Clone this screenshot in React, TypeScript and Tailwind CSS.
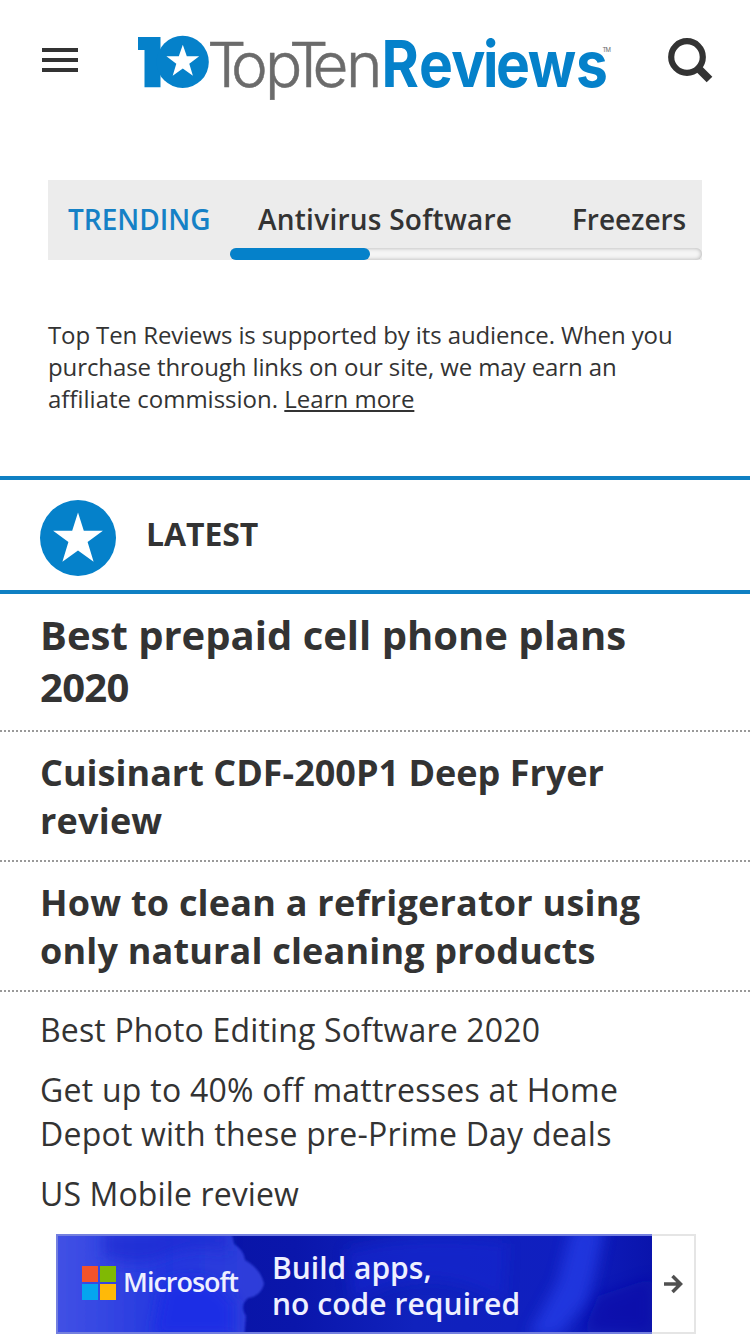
import { ReactNode } from 'react'

type Line = { text: string; className: string }

const headlines: { lines: Line[]; className: string }[] = [
  {
    lines: [
      { text: 'Best prepaid cell phone plans', className: '' },
      { text: '2020', className: 'tracking-[-0.7px]' },
    ],
    className: 'pt-[15px] pb-[17px] text-[40px] leading-[52px]',
  },
  {
    lines: [
      { text: 'Cuisinart CDF-200P1 Deep Fryer', className: '' },
      { text: 'review', className: 'tracking-[0.2px]' },
    ],
    className: 'pt-[17px] pb-[15px] text-[36px] leading-[48px]',
  },
  {
    lines: [
      { text: 'How to clean a refrigerator using', className: 'tracking-[0.23px]' },
      { text: 'only natural cleaning products', className: 'tracking-[0.18px]' },
    ],
    className: 'pt-[17px] pb-[15px] text-[36px] leading-[48px]',
  },
]

const links: Line[][] = [
  [{ text: 'Best Photo Editing Software 2020', className: 'tracking-[0.16px]' }],
  [
    { text: 'Get up to 40% off mattresses at Home', className: 'tracking-[0.25px]' },
    { text: 'Depot with these pre-Prime Day deals', className: 'tracking-[0.22px]' },
  ],
  [{ text: 'US Mobile review', className: 'tracking-[0.12px]' }],
]

const adCopy: Line[] = [
  { text: 'Build apps,', className: '' },
  { text: 'no code required', className: 'tracking-[0.05px]' },
]

function Lines({ lines }: { lines: Line[] }) {
  return (
    <>
      {lines.map((line) => (
        <span key={line.text} className={`block whitespace-nowrap ${line.className}`}>
          {line.text}
        </span>
      ))}
    </>
  )
}

function Logo() {
  return (
    <svg width="480" height="80" viewBox="134 28 480 80" className="block overflow-visible" aria-label="Top Ten Reviews">
      <path d="M138 37h22.5v50.3h-16V50H138z" fill="#0581ca" />
      <circle cx="182.7" cy="61.9" r="26.1" fill="#0581ca" />
      <path
        d="M182.8 44.8l4 11.4h12.4l-9.9 7.5 3.6 12-10.1-7.2-10.1 7.2 3.6-12-9.9-7.5h12.4z"
        fill="#fff"
      />
      <text
        x="207 231 265 289 312.5 346"
        y="87"
        fill="#6b6b6b"
        stroke="#6b6b6b"
        strokeWidth="0.5"
        fontFamily="Inter, sans-serif"
        fontWeight="300"
        fontSize="62"
      >
        TopTen
      </text>
      <text
        x="428.7 470.7 507.1 542.7 557.3 592.9 647.2"
        y="87"
        transform="scale(0.89 1)"
        fill="#0581ca"
        fontFamily="Inter, sans-serif"
        fontWeight="700"
        fontSize="64"
      >
        Reviews
      </text>
      <text x="602.5" y="52" fill="#6b6b6b" fontFamily="Inter, sans-serif" fontSize="6" textLength="8.5">
        TM
      </text>
    </svg>
  )
}

function Header() {
  return (
    <header className="flex h-[108px] items-start">
      <button className="mt-12 ml-[42px] flex w-9 flex-col gap-1.5" aria-label="Menu">
        <span className="h-1 w-full bg-[#333]" />
        <span className="h-1 w-full bg-[#333]" />
        <span className="h-1 w-full bg-[#333]" />
      </button>
      <div className="mt-7 ml-14">
        <Logo />
      </div>
      <svg width="48" height="48" viewBox="0 0 48 48" className="mt-9 ml-[51px]" fill="none" stroke="#333">
        <circle cx="22" cy="21" r="15.8" strokeWidth="6.2" />
        <path d="M32.500 31.500L44.500 43.500" strokeWidth="8" />
      </svg>
    </header>
  )
}

function Trending() {
  return (
    <nav className="mx-12 mt-[72px] flex h-20 overflow-hidden bg-[#ececec] text-[28px] font-semibold leading-[38px]">
      <div className="w-[182px] pt-5 pl-5 text-[#1581c6]">TRENDING</div>
      <div className="flex flex-1 flex-col justify-between">
        <div className="flex gap-[60px] pt-5 pl-7 whitespace-nowrap">
          <span className="w-[254px] tracking-[0.25px]">Antivirus Software</span>
          <span className="tracking-[-0.05px]">Freezers</span>
        </div>
        <div className="h-3 rounded-full bg-[#f5f5f5] shadow-[inset_0_0_4px_rgba(0,0,0,0.3)]">
          <div className="h-3 w-[140px] rounded-full bg-[#0581ca]" />
        </div>
      </div>
    </nav>
  )
}

function SectionHeading({ children }: { children: ReactNode }) {
  return (
    <div className="mt-[61px] flex h-[118px] items-start border-y-4 border-[#1080c3] pl-10">
      <svg width="76" height="76" viewBox="0 0 76 76" className="mt-5">
        <circle cx="38" cy="38" r="38" fill="#0581ca" />
        <path d="M38 12.500l5.800 18.200h19.100L47.600 42l6 19.800L38 50.400 22.400 61.800l6-19.800L13.100 30.700h19.100z" fill="#fff" />
      </svg>
      <h2 className="mt-8 ml-[30px] text-[32px] font-bold leading-[44px] tracking-[-0.1px]">{children}</h2>
    </div>
  )
}

function AdBanner() {
  return (
    <div className="mt-[18px] ml-14 flex h-[100px] w-[640px] border-2 border-[#e5e5e5]">
      <div className="relative -my-0.5 -ml-0.5 w-[596px] overflow-hidden border-2 border-r-0 border-[#7480df] bg-[#101fb8] text-[#eef0ff]">
        <svg viewBox="0 0 594 96" preserveAspectRatio="none" className="absolute inset-0 h-full w-full">
          <defs>
            <linearGradient id="sky">
              <stop offset="0" stopColor="#4353e5" />
              <stop offset="0.55" stopColor="#2437df" />
              <stop offset="1" stopColor="#303fd9" />
            </linearGradient>
            <linearGradient id="deep">
              <stop offset="0" stopColor="#0812a0" />
              <stop offset="0.4" stopColor="#0a16ab" />
              <stop offset="0.6" stopColor="#1022bd" />
              <stop offset="0.85" stopColor="#101fc0" />
              <stop offset="1" stopColor="#0a14ac" />
            </linearGradient>
            <filter id="soft" x="-30%" y="-30%" width="160%" height="160%">
              <feGaussianBlur stdDeviation="7" />
            </filter>
            <filter id="edge">
              <feGaussianBlur stdDeviation="1.2" />
            </filter>
          </defs>
          <rect width="594" height="96" fill="url(#deep)" />
          <path
            d="M-9 -9H172L176 8Q186 14 187 24Q203 33 206 48Q203 60 190 62Q181 70 188 80L186 105H-9z"
            fill="url(#sky)"
            filter="url(#edge)"
          />
          <path d="M45 -5H170V16Q140 8 112 18Q82 34 45 20z" fill="#1a2bd2" opacity="0.7" filter="url(#soft)" />
          <path d="M105 47Q148 36 163 53L176 66V100H95z" fill="#1a2de5" filter="url(#soft)" />
          <path d="M288 14Q360 -4 449 8L445 65Q365 20 295 68z" fill="#1628d0" opacity="0.6" filter="url(#soft)" />
          <path d="M514 -10H547L538 34 530 65 500 100H470L500 45z" fill="#283feb" opacity="0.7" filter="url(#soft)" />
          <path d="M540 60L594 42V96H525z" fill="#070faa" opacity="0.7" filter="url(#soft)" />
        </svg>
        <div className="relative flex items-start">
          <div className="mt-[30px] ml-6 grid grid-cols-2 gap-0.5">
            <span className="size-4 bg-[#f3532b]" />
            <span className="size-4 bg-[#80b904]" />
            <span className="size-4 bg-[#05a5ef]" />
            <span className="size-4 bg-[#ffb908]" />
          </div>
          <span className="mt-7 ml-[7px] w-[149px] text-[27px] font-semibold leading-9 tracking-[-1px]">
            Microsoft
          </span>
          <div className="mt-[14px] text-[30px] font-semibold leading-9">
            <Lines lines={adCopy} />
          </div>
        </div>
      </div>
      <div className="flex flex-1 items-center justify-center bg-white">
        <svg width="20" height="20" viewBox="0 0 20 20" fill="none" stroke="#505050" strokeWidth="3.5">
          <path d="M1 10h16M9.500 2L17.500 10L9.500 18" />
        </svg>
      </div>
    </div>
  )
}

export default function App() {
  return (
    <div className="h-[1334px] w-[750px] overflow-hidden bg-white font-['Open_Sans','Noto_Sans',sans-serif] text-[#333]">
      <Header />
      <Trending />
      <p className="mx-12 mt-[59px] text-[24px] leading-8">
        <span className="block tracking-[-0.12px] whitespace-nowrap">
          Top Ten Reviews is supported by its audience. When you
        </span>
        <span className="block tracking-[-0.1px] whitespace-nowrap">
          purchase through links on our site, we may earn an
        </span>
        affiliate commission. <a className="underline">Learn more</a>
      </p>
      <SectionHeading>LATEST</SectionHeading>
      {headlines.map(({ lines, className }) => (
        <article key={lines[0].text} className="border-b-2 border-dotted border-[#999] pl-10">
          <h3 className={`font-bold ${className}`}>
            <Lines lines={lines} />
          </h3>
        </article>
      ))}
      <ul className="mt-4 flex flex-col gap-4 pl-10 text-[32px] leading-[44px]">
        {links.map((lines) => (
          <li key={lines[0].text}>
            <Lines lines={lines} />
          </li>
        ))}
      </ul>
      <AdBanner />
    </div>
  )
}
